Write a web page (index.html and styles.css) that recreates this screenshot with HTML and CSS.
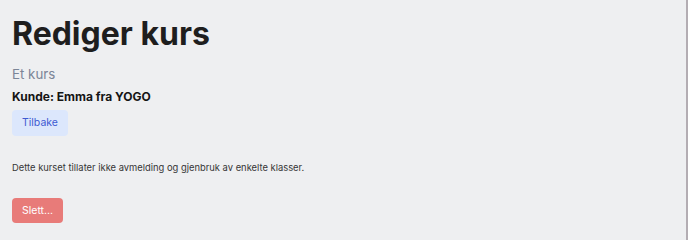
FILE: index.html
```html
<!DOCTYPE html>
<html lang="no">
<head>
<meta charset="utf-8">
<title>Rediger kurs</title>
<link rel="stylesheet" href="styles.css">
</head>
<body>
<main class="page">
  <h1 class="title">Rediger kurs</h1>
  <p class="subtitle">Et kurs</p>
  <p class="customer">Kunde: Emma fra YOGO</p>
  <div class="actions"><a class="btn btn-back" href="#">Tilbake</a></div>
  <p class="note">Dette kurset tillater ikke avmelding og gjenbruk av enkelte klasser.</p>
  <div class="actions actions-delete"><button class="btn btn-delete" type="button">Slett...</button></div>
</main>
<div class="edge"></div>
</body>
</html>
```

FILE: styles.css
```css
html, body {
  margin: 0;
  height: 100%;
}
body {
  background: #eeeff1;
  font-family: Inter, "DejaVu Sans", sans-serif;
  color: #1f1f1f;
  display: flex;
}
.page {
  flex: 1;
  padding: 14px 12px 0 12px;
  display: flex;
  flex-direction: column;
  align-items: flex-start;
}
.edge {
  width: 2px;
  background: #b3adb3;
}
.title {
  margin: 0;
  font-size: 32px;
  line-height: 40px;
  font-weight: 700;
  color: #1e1e1e;
}
.subtitle {
  margin: 10px 0 0 0;
  font-size: 13.3px;
  line-height: 20px;
  color: #7b8597;
}
.customer {
  margin: 4px 0 0 0;
  font-size: 12px;
  line-height: 18px;
  font-weight: 700;
  color: #151515;
}
.actions {
  margin-top: 4px;
}
.actions-delete {
  margin-top: 23px;
}
.btn {
  display: inline-block;
  border: 0;
  border-radius: 4px;
  font-family: inherit;
  font-size: 10.5px;
  height: 26px;
  line-height: 26px;
  padding: 0 10px;
  text-decoration: none;
  cursor: pointer;
}
.btn-back {
  background: #dce7fc;
  color: #3d5ad2;
}
.note {
  margin: 25px 0 0 0;
  font-size: 9.4px;
  line-height: 14px;
  color: #363636;
}
.btn-delete {
  background: #e87b79;
  color: #fff;
  height: 25px;
  line-height: 25px;
}
```
